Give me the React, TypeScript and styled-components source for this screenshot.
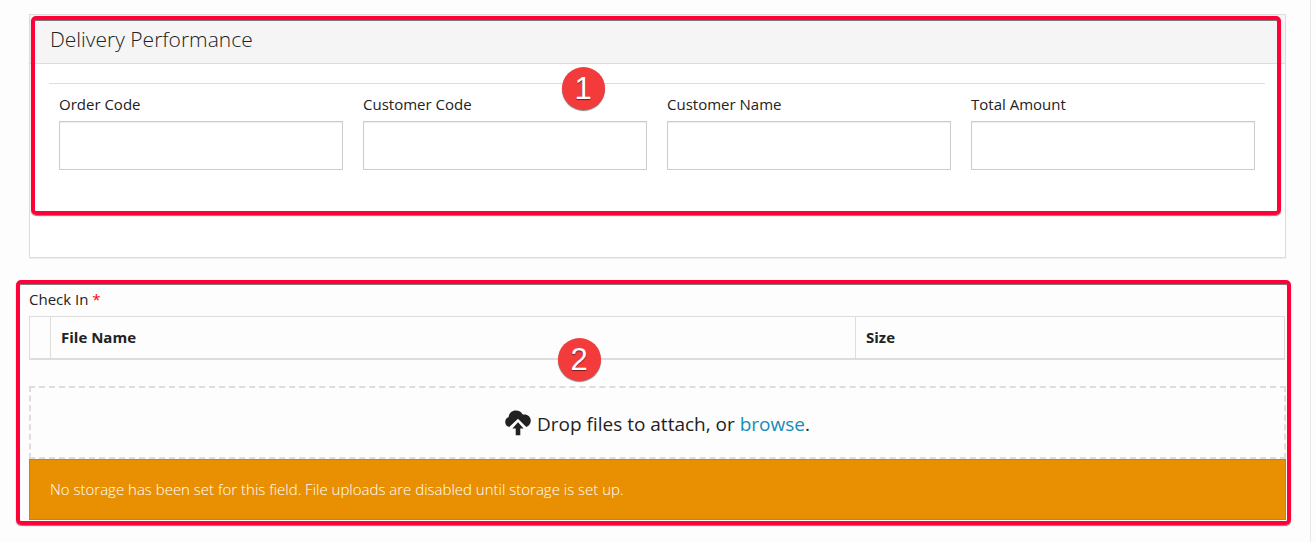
import React from "react";
import styled, { createGlobalStyle } from "styled-components";

const GlobalStyle = createGlobalStyle`
  *, *::before, *::after { box-sizing: border-box; }
  body {
    margin: 0;
    background: #fdfdfd;
    color: #222;
    font-family: "Open Sans", "Liberation Sans", sans-serif;
    font-size: 15px;
    line-height: 22px;
  }
`;

const Page = styled.main`
  min-height: 100vh;
  margin-right: 5px;
  padding: 14px 24px 16px 29px;
  border-right: 1px solid #e8e8e8;
`;

const Panel = styled.section`
  position: relative;
  margin-bottom: 30px;
  padding-bottom: 87px;
  background: #fff;
  border: 1px solid #ddd;
  box-shadow: 0 1px 1px rgba(0, 0, 0, 0.05);
`;

const PanelHeader = styled.header`
  padding: 10px 20px;
  background: #f5f5f5;
  border-bottom: 1px solid #ddd;
`;

const PanelTitle = styled.h3`
  margin: 0;
  font-size: 21px;
  font-weight: 300;
  line-height: 28px;
`;

const Fields = styled.div`
  display: grid;
  grid-template-columns: repeat(4, 1fr);
  gap: 20px;
  margin: 19px 20px 0 19px;
  padding: 9px 10px 0;
  border-top: 1px solid #ddd;
`;

const Field = styled.div`
  display: flex;
  flex-direction: column;
  gap: 6px;
`;

const TextInput = styled.input`
  width: 100%;
  height: 49px;
  padding: 8px 12px;
  background: #fff;
  border: 1px solid #ccc;
  border-radius: 0;
  box-shadow: inset 0 1px 1px rgba(0, 0, 0, 0.075);
  font: inherit;
`;

const Upload = styled.section`
  position: relative;
`;

const UploadLabel = styled.div`
  margin-bottom: 6px;
`;

const Required = styled.span`
  color: #f00;
`;

const FileTable = styled.table`
  width: calc(100% - 1px);
  margin-bottom: 26px;
  border: 1px solid #ddd;
  border-bottom-width: 2px;
  border-spacing: 0;
  table-layout: fixed;
`;

const HeadCell = styled.th<{ $width?: string }>`
  width: ${(p) => p.$width ?? "auto"};
  height: 41px;
  padding: 0 10px 2px;
  border-left: 1px solid #ddd;
  font-weight: 700;
  text-align: left;
`;

const BlankCell = styled.td`
  width: 20px;
  padding: 0;
`;

const DropZone = styled.div`
  display: flex;
  align-items: center;
  justify-content: center;
  gap: 6px;
  height: 73px;
  padding-top: 2px;
  border: 2px dashed #ddd;
  font-size: 19px;
  line-height: 26px;
`;

const BrowseLink = styled.a`
  color: #158cba;
  text-decoration: none;
`;

const Warning = styled.div`
  padding: 18px 20px 19px;
  background: #e99002;
  border: 1px solid #d08002;
  color: #fff;
  font-weight: 300;
`;

const Outline = styled.div<{ $inset: string }>`
  position: absolute;
  inset: ${(p) => p.$inset};
  border: 4px solid #ff0039;
  border-radius: 5px;
  box-shadow: 0 1px 1px rgba(0, 0, 0, 0.5), inset 0 1px 0 rgba(0, 0, 0, 0.5);
  pointer-events: none;
`;

const Badge = styled.span<{ $top: number; $left: string }>`
  position: absolute;
  top: ${(p) => p.$top}px;
  left: ${(p) => p.$left};
  display: grid;
  place-items: center;
  width: 43px;
  height: 43px;
  border-radius: 50%;
  background: #f43b3b;
  box-shadow: 0 1px 1px rgba(0, 0, 0, 0.5);
  color: #fff;
  font: 400 31px/43px "Liberation Sans", sans-serif;
  text-shadow: 0 1px 1px rgba(0, 0, 0, 0.5);
`;

const CloudIcon = styled.svg`
  width: 26px;
  height: 26px;
  margin-bottom: 2px;
  fill: #222;
`;

const CloudUpload = () => (
  <CloudIcon viewBox="0 0 26 26" aria-hidden="true">
    <path d="M4.2 17A5.200 5.200 0 0 1 .2 12.100C.2 9.400 1.800 7.600 3.500 7.200C4 3.200 7 .5 11 .5c3 0 5.400 1.500 6.700 4.100 4.300-1 8.100 1.900 8.100 6 0 3-1.900 5.500-4.500 6.300L13 8.800Z" />
    <path d="M13 12.300l5.600 6.200h-3.300v6.700h-4.600v-6.700H7.400Z" />
  </CloudIcon>
);

const fields = [
  { id: "orderCode", label: "Order Code" },
  { id: "customerCode", label: "Customer Code" },
  { id: "customerName", label: "Customer Name" },
  { id: "totalAmount", label: "Total Amount" },
];

export default function App() {
  return (
    <>
      <GlobalStyle />
      <Page>
        <Panel>
          <PanelHeader>
            <PanelTitle>Delivery Performance</PanelTitle>
          </PanelHeader>
          <Fields>
            {fields.map((f) => (
              <Field key={f.id}>
                <label htmlFor={f.id}>{f.label}</label>
                <TextInput id={f.id} type="text" />
              </Field>
            ))}
          </Fields>
          <Outline $inset="1px 4px 42px 1px" />
          <Badge $top={52} $left="calc(50% - 96px)">1</Badge>
        </Panel>
        <Upload>
          <UploadLabel>
            Check In <Required>*</Required>
          </UploadLabel>
          <FileTable>
            <thead>
              <tr>
                <BlankCell />
                <HeadCell>File Name</HeadCell>
                <HeadCell $width="429px">Size</HeadCell>
              </tr>
            </thead>
          </FileTable>
          <DropZone>
            <CloudUpload />
            <span>
              Drop files to attach, or <BrowseLink href="#">browse</BrowseLink>.
            </span>
          </DropZone>
          <Warning>
            No storage has been set for this field. File uploads are disabled until storage is set up.
          </Warning>
          <Outline $inset="-8px -5px -5px -13px" />
          <Badge $top={50} $left="calc(50% - 100px)">2</Badge>
        </Upload>
      </Page>
    </>
  );
}
